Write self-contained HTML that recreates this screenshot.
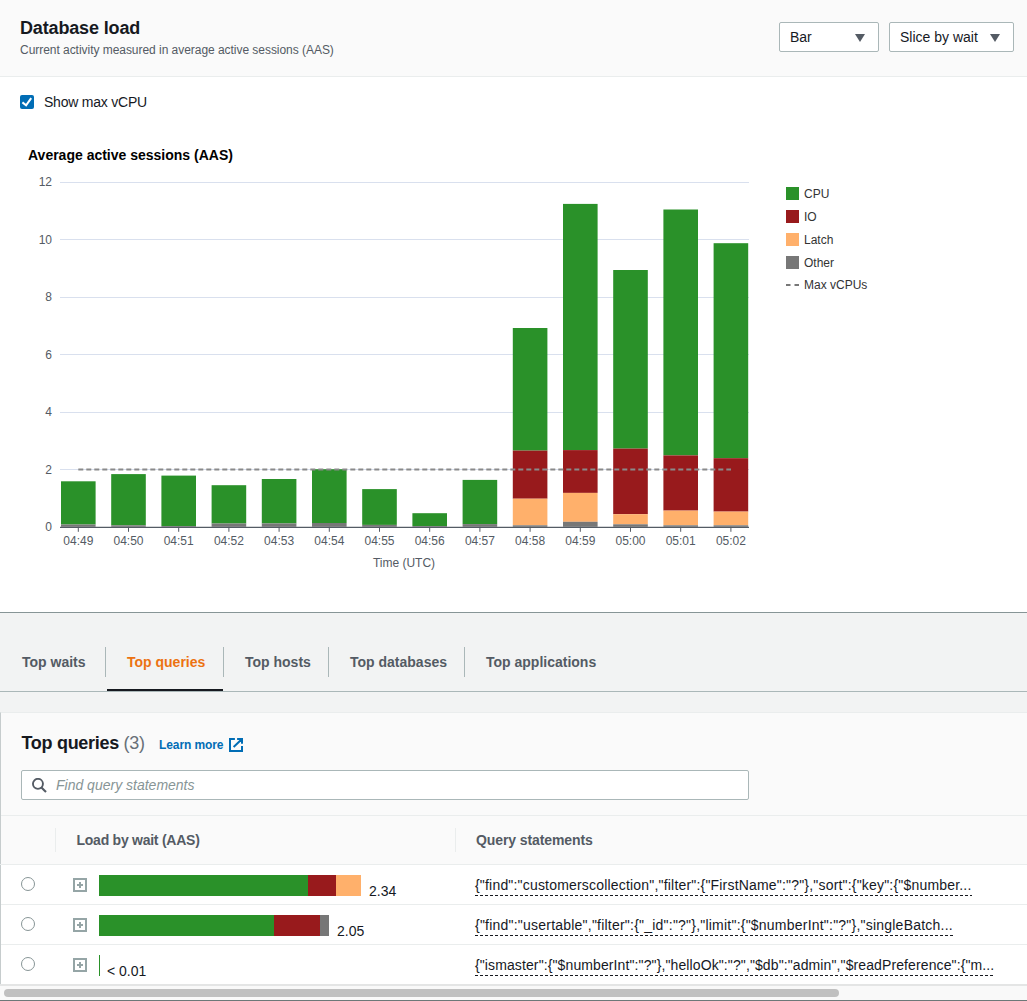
<!DOCTYPE html>
<html>
<head>
<meta charset="utf-8">
<style>
html,body{margin:0;padding:0;}
body{width:1027px;height:1001px;overflow:hidden;position:relative;background:#fff;font-family:"Liberation Sans",sans-serif;color:#16191f;}
.a{position:absolute;white-space:nowrap;}
.hdr{position:absolute;left:0;top:0;width:1027px;height:76px;background:#fafafa;border-bottom:1px solid #eaeded;}
.title{font-size:18px;line-height:22px;font-weight:bold;color:#16191f;}
.sub{font-size:12px;line-height:16px;color:#545b64;}
.dd{position:absolute;top:22px;height:28px;background:#fff;border:1px solid #aab7b8;border-radius:2px;box-sizing:content-box;}
.dd span{position:absolute;left:10px;top:4px;font-size:14px;line-height:20px;color:#16191f;}
.dd i{position:absolute;top:10.5px;width:0;height:0;border-left:5.5px solid transparent;border-right:5.5px solid transparent;border-top:8px solid #545b64;}
.cb{position:absolute;left:20px;top:95px;width:14px;height:14px;background:#016db5;border-radius:2px;}
.t14{font-size:14px;line-height:20px;}
svg text{font-family:"Liberation Sans",sans-serif;}
.yl{font-size:12px;fill:#545b64;}
.xl{font-size:12px;fill:#545b64;}
.axt{font-size:12px;fill:#545b64;}
.ct{font-size:14px;font-weight:bold;fill:#000;}
.lg{font-size:12px;fill:#333;}
.tabs{position:absolute;left:0;top:612px;width:1027px;height:100px;background:#f2f3f3;border-top:1px solid #879596;}
.tab{position:absolute;top:39px;font-size:14px;line-height:20px;font-weight:bold;color:#545b64;}
.sep{position:absolute;top:34px;width:1px;height:30px;background:#aab7b8;}
.panel{position:absolute;left:0;top:712px;width:1040px;height:300px;background:#fafafa;border-left:1px solid #c6cccd;border-top:1px solid #eaeded;}
.row{position:absolute;left:1px;width:1030px;height:39px;background:#fff;border-bottom:1px solid #eaeded;}
.radio{position:absolute;left:21px;width:12px;height:12px;border:1px solid #879596;border-radius:50%;background:#fff;}
.exp{position:absolute;left:73px;width:10px;height:10px;border:2px solid #95a5a6;}
.exp:before{content:"";position:absolute;left:4px;top:2px;width:2px;height:6px;background:#95a5a6;}
.exp:after{content:"";position:absolute;left:2px;top:4px;width:6px;height:2px;background:#95a5a6;}
.q{position:absolute;left:475px;font-size:14px;line-height:20px;color:#16191f;padding-bottom:1px;background:repeating-linear-gradient(90deg,#16191f 0 3px,transparent 3px 5px) left bottom/100% 1px no-repeat;}
.val{position:absolute;font-size:14px;line-height:20px;color:#16191f;}
.bar{position:absolute;height:21px;}
</style>
</head>
<body>
<div class="hdr">
  <div class="a title" style="left:20px;top:17px;letter-spacing:-0.15px;">Database load</div>
  <div class="a sub" style="left:20px;top:42px;letter-spacing:-0.04px;">Current activity measured in average active sessions (AAS)</div>
  <div class="dd" style="left:779px;width:98px;"><span>Bar</span><i style="left:75px;"></i></div>
  <div class="dd" style="left:889px;width:123px;"><span>Slice by wait</span><i style="left:100px;"></i></div>
</div>
<div class="cb"><svg width="14" height="14" viewBox="0 0 14 14" style="position:absolute;left:0;top:0"><path d="M2.4 7.4 L6.1 10.4 L11.2 3.2" fill="none" stroke="#fff" stroke-width="2"/></svg></div>
<div class="a t14" style="left:44px;top:92px;letter-spacing:-0.22px;">Show max vCPU</div>

<svg width="1027" height="612" style="position:absolute;left:0;top:0;">
<line x1="60" x2="749" y1="469.50" y2="469.50" stroke="#d9e0ee" stroke-width="1"/>
<text x="52" y="473.58" text-anchor="end" class="yl">2</text>
<line x1="60" x2="749" y1="412.50" y2="412.50" stroke="#d9e0ee" stroke-width="1"/>
<text x="52" y="416.16" text-anchor="end" class="yl">4</text>
<line x1="60" x2="749" y1="354.50" y2="354.50" stroke="#d9e0ee" stroke-width="1"/>
<text x="52" y="358.74" text-anchor="end" class="yl">6</text>
<line x1="60" x2="749" y1="297.50" y2="297.50" stroke="#d9e0ee" stroke-width="1"/>
<text x="52" y="301.32" text-anchor="end" class="yl">8</text>
<line x1="60" x2="749" y1="239.50" y2="239.50" stroke="#d9e0ee" stroke-width="1"/>
<text x="52" y="243.90" text-anchor="end" class="yl">10</text>
<line x1="60" x2="749" y1="182.50" y2="182.50" stroke="#d9e0ee" stroke-width="1"/>
<text x="52" y="186.48" text-anchor="end" class="yl">12</text>
<text x="52" y="531.00" text-anchor="end" class="yl">0</text>
<rect x="61.00" y="481.30" width="34.6" height="43.20" fill="#2a9129"/>
<rect x="61.00" y="524.50" width="34.6" height="2.30" fill="#777777"/>
<line x1="78.30" x2="78.30" y1="526.8" y2="531.8" stroke="#545b64" stroke-width="1"/>
<text x="78.30" y="544.80" text-anchor="middle" class="xl">04:49</text>
<rect x="111.20" y="474.10" width="34.6" height="51.20" fill="#2a9129"/>
<rect x="111.20" y="525.30" width="34.6" height="1.50" fill="#777777"/>
<line x1="128.50" x2="128.50" y1="526.8" y2="531.8" stroke="#545b64" stroke-width="1"/>
<text x="128.50" y="544.80" text-anchor="middle" class="xl">04:50</text>
<rect x="161.40" y="475.60" width="34.6" height="50.40" fill="#2a9129"/>
<rect x="161.40" y="526.00" width="34.6" height="0.80" fill="#777777"/>
<line x1="178.70" x2="178.70" y1="526.8" y2="531.8" stroke="#545b64" stroke-width="1"/>
<text x="178.70" y="544.80" text-anchor="middle" class="xl">04:51</text>
<rect x="211.60" y="485.20" width="34.6" height="38.30" fill="#2a9129"/>
<rect x="211.60" y="523.50" width="34.6" height="3.30" fill="#777777"/>
<line x1="228.90" x2="228.90" y1="526.8" y2="531.8" stroke="#545b64" stroke-width="1"/>
<text x="228.90" y="544.80" text-anchor="middle" class="xl">04:52</text>
<rect x="261.80" y="479.00" width="34.6" height="44.40" fill="#2a9129"/>
<rect x="261.80" y="523.40" width="34.6" height="3.40" fill="#777777"/>
<line x1="279.10" x2="279.10" y1="526.8" y2="531.8" stroke="#545b64" stroke-width="1"/>
<text x="279.10" y="544.80" text-anchor="middle" class="xl">04:53</text>
<rect x="312.00" y="469.20" width="34.6" height="53.80" fill="#2a9129"/>
<rect x="312.00" y="523.00" width="34.6" height="3.80" fill="#777777"/>
<line x1="329.30" x2="329.30" y1="526.8" y2="531.8" stroke="#545b64" stroke-width="1"/>
<text x="329.30" y="544.80" text-anchor="middle" class="xl">04:54</text>
<rect x="362.20" y="489.10" width="34.6" height="35.80" fill="#2a9129"/>
<rect x="362.20" y="524.90" width="34.6" height="1.90" fill="#777777"/>
<line x1="379.50" x2="379.50" y1="526.8" y2="531.8" stroke="#545b64" stroke-width="1"/>
<text x="379.50" y="544.80" text-anchor="middle" class="xl">04:55</text>
<rect x="412.40" y="513.20" width="34.6" height="12.80" fill="#2a9129"/>
<rect x="412.40" y="526.00" width="34.6" height="0.80" fill="#777777"/>
<line x1="429.70" x2="429.70" y1="526.8" y2="531.8" stroke="#545b64" stroke-width="1"/>
<text x="429.70" y="544.80" text-anchor="middle" class="xl">04:56</text>
<rect x="462.60" y="479.90" width="34.6" height="44.20" fill="#2a9129"/>
<rect x="462.60" y="524.10" width="34.6" height="2.70" fill="#777777"/>
<line x1="479.90" x2="479.90" y1="526.8" y2="531.8" stroke="#545b64" stroke-width="1"/>
<text x="479.90" y="544.80" text-anchor="middle" class="xl">04:57</text>
<rect x="512.80" y="328.00" width="34.6" height="122.60" fill="#2a9129"/>
<rect x="512.80" y="450.60" width="34.6" height="48.10" fill="#981a1c"/>
<rect x="512.80" y="498.70" width="34.6" height="26.60" fill="#ffb06b"/>
<rect x="512.80" y="525.30" width="34.6" height="1.50" fill="#777777"/>
<line x1="530.10" x2="530.10" y1="526.8" y2="531.8" stroke="#545b64" stroke-width="1"/>
<text x="530.10" y="544.80" text-anchor="middle" class="xl">04:58</text>
<rect x="563.00" y="203.90" width="34.6" height="246.20" fill="#2a9129"/>
<rect x="563.00" y="450.10" width="34.6" height="42.80" fill="#981a1c"/>
<rect x="563.00" y="492.90" width="34.6" height="28.90" fill="#ffb06b"/>
<rect x="563.00" y="521.80" width="34.6" height="5.00" fill="#777777"/>
<line x1="580.30" x2="580.30" y1="526.8" y2="531.8" stroke="#545b64" stroke-width="1"/>
<text x="580.30" y="544.80" text-anchor="middle" class="xl">04:59</text>
<rect x="613.20" y="270.00" width="34.6" height="178.60" fill="#2a9129"/>
<rect x="613.20" y="448.60" width="34.6" height="65.60" fill="#981a1c"/>
<rect x="613.20" y="514.20" width="34.6" height="10.10" fill="#ffb06b"/>
<rect x="613.20" y="524.30" width="34.6" height="2.50" fill="#777777"/>
<line x1="630.50" x2="630.50" y1="526.8" y2="531.8" stroke="#545b64" stroke-width="1"/>
<text x="630.50" y="544.80" text-anchor="middle" class="xl">05:00</text>
<rect x="663.40" y="209.50" width="34.6" height="245.90" fill="#2a9129"/>
<rect x="663.40" y="455.40" width="34.6" height="55.20" fill="#981a1c"/>
<rect x="663.40" y="510.60" width="34.6" height="14.70" fill="#ffb06b"/>
<rect x="663.40" y="525.30" width="34.6" height="1.50" fill="#777777"/>
<line x1="680.70" x2="680.70" y1="526.8" y2="531.8" stroke="#545b64" stroke-width="1"/>
<text x="680.70" y="544.80" text-anchor="middle" class="xl">05:01</text>
<rect x="713.60" y="243.20" width="34.6" height="215.00" fill="#2a9129"/>
<rect x="713.60" y="458.20" width="34.6" height="53.40" fill="#981a1c"/>
<rect x="713.60" y="511.60" width="34.6" height="13.70" fill="#ffb06b"/>
<rect x="713.60" y="525.30" width="34.6" height="1.50" fill="#777777"/>
<line x1="730.90" x2="730.90" y1="526.8" y2="531.8" stroke="#545b64" stroke-width="1"/>
<text x="730.90" y="544.80" text-anchor="middle" class="xl">05:02</text>
<line x1="60" x2="749" y1="527.30" y2="527.30" stroke="#545b64" stroke-width="1.3"/>
<line x1="78.3" x2="731" y1="469.38" y2="469.38" stroke="#8a8a8a" stroke-width="2" stroke-dasharray="5,3"/>
<text x="404" y="566.8" text-anchor="middle" class="axt">Time (UTC)</text>
<text x="28" y="159.6" class="ct">Average active sessions (AAS)</text>
<rect x="786" y="187" width="13" height="13" fill="#2a9129"/>
<text x="804" y="197.8" class="lg">CPU</text>
<rect x="786" y="210" width="13" height="13" fill="#981a1c"/>
<text x="804" y="220.8" class="lg">IO</text>
<rect x="786" y="233" width="13" height="13" fill="#ffb06b"/>
<text x="804" y="243.8" class="lg">Latch</text>
<rect x="786" y="256" width="13" height="13" fill="#777777"/>
<text x="804" y="266.8" class="lg">Other</text>
<line x1="786" x2="799" y1="285" y2="285" stroke="#777" stroke-width="2" stroke-dasharray="4.5,4"/>
<text x="804" y="289" class="lg">Max vCPUs</text>
</svg>

<div class="tabs">
  <div class="tab" style="left:22px;">Top waits</div>
  <div class="sep" style="left:105px;"></div>
  <div class="tab" style="left:127px;color:#ec7211;">Top queries</div>
  <div class="sep" style="left:223px;"></div>
  <div class="tab" style="left:245px;">Top hosts</div>
  <div class="sep" style="left:328px;"></div>
  <div class="tab" style="left:350px;">Top databases</div>
  <div class="sep" style="left:464px;"></div>
  <div class="tab" style="left:486px;">Top applications</div>
  <div style="position:absolute;left:107px;top:76px;width:116px;height:3px;background:#16191f;"></div>
  <div style="position:absolute;left:0;top:78px;width:1027px;height:1px;background:#aab7b8;"></div>
</div>

<div class="panel">
  <div class="a title" style="left:20.5px;top:19px;letter-spacing:-0.3px;">Top queries <span style="font-weight:normal;color:#687078;">(3)</span></div>
  <div class="a" style="left:158px;top:24px;font-size:12px;line-height:16px;font-weight:bold;color:#016db5;letter-spacing:-0.1px;">Learn more</div>
  <svg width="14" height="14" viewBox="0 0 14 14" style="position:absolute;left:228px;top:25px;"><path d="M5.9 1 H1 V13 H13 V8.1 M8.1 1 H13 V5.8 M13 1 L4.6 8.9" fill="none" stroke="#016db5" stroke-width="2"/></svg>
  <div style="position:absolute;left:20px;top:57px;width:726px;height:28px;background:#fff;border:1px solid #aab7b8;border-radius:2px;">
    <svg width="16" height="16" viewBox="0 0 16 16" style="position:absolute;left:10px;top:7px;"><circle cx="5.95" cy="5.85" r="5" fill="none" stroke="#545b64" stroke-width="1.9"/><path d="M9.4 9.4 L14 14" stroke="#545b64" stroke-width="2.1"/></svg>
    <div class="a" style="left:34px;top:4px;font-size:14px;line-height:20px;font-style:italic;color:#879596;">Find query statements</div>
  </div>
  <div style="position:absolute;left:0;top:102px;width:1040px;height:1px;background:#eaeded;"></div>
  <div style="position:absolute;left:54px;top:115px;width:1px;height:24px;background:#eaeded;"></div>
  <div style="position:absolute;left:454px;top:115px;width:1px;height:24px;background:#eaeded;"></div>
  <div class="a" style="left:75.5px;top:117px;font-size:14px;line-height:20px;font-weight:bold;color:#545b64;letter-spacing:-0.25px;">Load by wait (AAS)</div>
  <div class="a" style="left:475px;top:117px;font-size:14px;line-height:20px;font-weight:bold;color:#545b64;letter-spacing:-0.1px;">Query statements</div>
</div>

<div class="row" style="top:865px;"></div>
<div class="row" style="top:905px;"></div>
<div class="row" style="top:945px;"></div>
<div style="position:absolute;left:0;top:864px;width:1027px;height:1px;background:#eaeded;"></div>

<div class="radio" style="top:877px;"></div>
<div class="radio" style="top:917px;"></div>
<div class="radio" style="top:957px;"></div>
<div class="exp" style="top:878px;"></div>
<div class="exp" style="top:918px;"></div>
<div class="exp" style="top:958px;"></div>

<div class="bar" style="left:99px;top:875px;width:209px;background:#2a9129;"></div>
<div class="bar" style="left:308px;top:875px;width:28px;background:#981a1c;"></div>
<div class="bar" style="left:336px;top:875px;width:25px;background:#ffb06b;"></div>
<div class="val" style="left:369px;top:881px;">2.34</div>

<div class="bar" style="left:99px;top:915px;width:175px;background:#2a9129;"></div>
<div class="bar" style="left:274px;top:915px;width:46px;background:#981a1c;"></div>
<div class="bar" style="left:320px;top:915px;width:9px;background:#777777;"></div>
<div class="val" style="left:337px;top:921px;">2.05</div>

<div class="bar" style="left:99px;top:955px;width:1px;background:#2a9129;"></div>
<div class="val" style="left:107px;top:961px;">&lt; 0.01</div>

<div class="q" style="top:875px;letter-spacing:0.19px;">{"find":"customerscollection","filter":{"FirstName":"?"},"sort":{"key":{"$number...</div>
<div class="q" style="top:915px;letter-spacing:0.22px;">{"find":"usertable","filter":{"_id":"?"},"limit":{"$numberInt":"?"},"singleBatch...</div>
<div class="q" style="top:955px;letter-spacing:0.11px;">{"ismaster":{"$numberInt":"?"},"helloOk":"?","$db":"admin","$readPreference":{"m...</div>

<div style="position:absolute;left:0;top:984px;width:1027px;height:2px;background:#e4e5e5;"></div>
<div style="position:absolute;left:0;top:986px;width:1027px;height:14px;background:#f9f9f9;"></div>
<div style="position:absolute;left:4px;top:989px;width:835px;height:8px;background:#c0c0c0;border-radius:4px;"></div>
<div style="position:absolute;left:0;top:1000px;width:1027px;height:1px;background:#6d7878;"></div>
</body>
</html>
